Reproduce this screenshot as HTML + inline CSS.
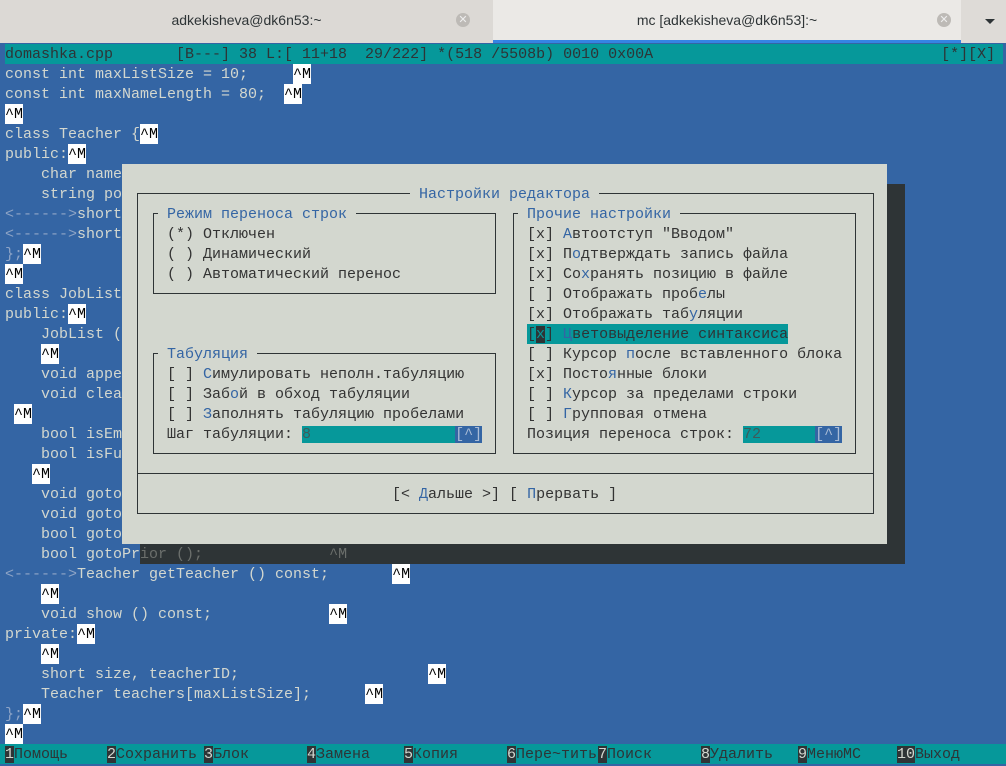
<!DOCTYPE html>
<html><head><meta charset="utf-8"><style>
*{margin:0;padding:0;box-sizing:border-box}
body{width:1006px;height:762px;overflow:hidden;background:#3465a4;position:relative;font-family:"Liberation Mono","DejaVu Sans Mono",monospace;font-size:15px}
.r{position:absolute;height:20px;line-height:22px;white-space:pre;color:#d3d7cf}
.m{background:#fff;color:#000;display:inline-block;height:20px;line-height:22px;vertical-align:top}
.d{color:#8ea4c6}
.tabs{position:absolute;left:0;top:0;width:1006px;height:43px;background:#dedbd7;font-family:"Liberation Sans",sans-serif;font-size:14px;color:#2e3436}
.tab{position:absolute;top:0;height:43px;text-align:center;line-height:40px}
.x{position:absolute;top:13px;width:14px;height:14px;border-radius:50%;background:#bdbab6;color:#eee;font-size:11px;line-height:14px;text-align:center}
.dlg{position:absolute;left:122px;top:164px;width:765px;height:380px;background:#d3d7cf}
.bx{position:absolute;border:1px solid #2e3436}
.t{color:#333}
.h{color:#3465a4}
.k{position:absolute;top:744px;height:20px;line-height:22px;white-space:pre;color:#2e3436}
.n{background:#2e3436;color:#d3d7cf}
</style></head><body>
<div class="tabs">
 <div class="tab" style="left:0;width:493px;background:#dcd9d5">adkekisheva@dk6n53:~</div>
 <div class="x" style="left:456px">✕</div>
 <div class="tab" style="left:493px;width:468px;background:#ebe9e6;border-bottom:3px solid #3584e4">mc [adkekisheva@dk6n53]:~</div>
 <div class="x" style="left:937px">✕</div>
 <div style="position:absolute;left:985px;top:19px;width:0;height:0;border-left:5px solid transparent;border-right:5px solid transparent;border-top:5px solid #2e3436"></div>
</div>
<div class="r" style="left:5px;top:44px;width:998px;background:#06989a;color:#2e3436">domashka.cpp       [B---] 38 L:[ 11+18  29/222] *(518 /5508b) 0010 0x00A                                [*][X]</div>
<div class="r" style="left:5px;top:64px">const int maxListSize = 10;     <span class="m">^M</span></div>
<div class="r" style="left:5px;top:84px">const int maxNameLength = 80;  <span class="m">^M</span></div>
<div class="r" style="left:5px;top:104px"><span class="m">^M</span></div>
<div class="r" style="left:5px;top:124px">class Teacher {<span class="m">^M</span></div>
<div class="r" style="left:5px;top:144px">public:<span class="m">^M</span></div>
<div class="r" style="left:5px;top:164px">    char name</div>
<div class="r" style="left:5px;top:184px">    string po</div>
<div class="r" style="left:5px;top:204px"><span class="d">&lt;------&gt;</span>short</div>
<div class="r" style="left:5px;top:224px"><span class="d">&lt;------&gt;</span>short</div>
<div class="r" style="left:5px;top:244px"><span class="d">};</span><span class="m">^M</span></div>
<div class="r" style="left:5px;top:264px"><span class="m">^M</span></div>
<div class="r" style="left:5px;top:284px">class JobList</div>
<div class="r" style="left:5px;top:304px">public:<span class="m">^M</span></div>
<div class="r" style="left:5px;top:324px">    JobList (</div>
<div class="r" style="left:5px;top:344px">    <span class="m">^M</span></div>
<div class="r" style="left:5px;top:364px">    void appe</div>
<div class="r" style="left:5px;top:384px">    void clea</div>
<div class="r" style="left:5px;top:404px"> <span class="m">^M</span></div>
<div class="r" style="left:5px;top:424px">    bool isEm</div>
<div class="r" style="left:5px;top:444px">    bool isFu</div>
<div class="r" style="left:5px;top:464px">   <span class="m">^M</span></div>
<div class="r" style="left:5px;top:484px">    void goto</div>
<div class="r" style="left:5px;top:504px">    void goto</div>
<div class="r" style="left:5px;top:524px">    bool goto</div>
<div style="position:absolute;left:887px;top:184px;width:18px;height:380px;background:#2e3436"></div>
<div style="position:absolute;left:140px;top:544px;width:765px;height:20px;background:#2e3436"></div>
<div class="r" style="left:5px;top:544px">    bool gotoPr<span style="color:#6b6f6c">ior ();              </span><span style="color:#6b6f6c">^M</span></div>
<div class="r" style="left:5px;top:564px"><span class="d">&lt;------&gt;</span>Teacher getTeacher () const;       <span class="m">^M</span></div>
<div class="r" style="left:5px;top:584px">    <span class="m">^M</span></div>
<div class="r" style="left:5px;top:604px">    void show () const;             <span class="m">^M</span></div>
<div class="r" style="left:5px;top:624px">private:<span class="m">^M</span></div>
<div class="r" style="left:5px;top:644px">    <span class="m">^M</span></div>
<div class="r" style="left:5px;top:664px">    short size, teacherID;                     <span class="m">^M</span></div>
<div class="r" style="left:5px;top:684px">    Teacher teachers[maxListSize];      <span class="m">^M</span></div>
<div class="r" style="left:5px;top:704px"><span class="d">};</span><span class="m">^M</span></div>
<div class="r" style="left:5px;top:724px"><span class="m">^M</span></div>

<div class="dlg"></div>
<div class="bx" style="left:137px;top:193px;width:737px;height:321px"></div>
<div class="bx" style="left:137px;top:473px;width:737px;height:0;border-width:1px 0 0 0"></div>
<div class="bx" style="left:153px;top:213px;width:343px;height:81px"></div>
<div class="bx" style="left:153px;top:353px;width:343px;height:101px"></div>
<div class="bx" style="left:513px;top:213px;width:343px;height:241px"></div>

<div class="r h" style="left:410px;top:184px;background:#d3d7cf"> Настройки редактора </div>
<div class="r h" style="left:158px;top:204px;background:#d3d7cf"> Режим переноса строк </div>
<div class="r t" style="left:167px;top:224px">(*) Отключен</div>
<div class="r t" style="left:167px;top:244px">( ) Динамический</div>
<div class="r t" style="left:167px;top:264px">( ) Автоматический перенос</div>
<div class="r h" style="left:158px;top:344px;background:#d3d7cf"> Табуляция </div>
<div class="r t" style="left:167px;top:364px">[ ] <span class="h">С</span>имулировать неполн.табуляцию</div>
<div class="r t" style="left:167px;top:384px">[ ] Заб<span class="h">о</span>й в обход табуляции</div>
<div class="r t" style="left:167px;top:404px">[ ] <span class="h">З</span>аполнять табуляцию пробелами</div>
<div class="r t" style="left:167px;top:424px">Шаг табуляции: <span style="background:#06989a;color:#3f5a5a">8                </span><span style="background:#3465a4;color:#a9bbd6">[^]</span></div>

<div class="r h" style="left:518px;top:204px;background:#d3d7cf"> Прочие настройки </div>
<div class="r t" style="left:527px;top:224px">[x] <span class="h">А</span>втоотступ "Вводом"</div>
<div class="r t" style="left:527px;top:244px">[x] П<span class="h">о</span>дтверждать запись файла</div>
<div class="r t" style="left:527px;top:264px">[x] Со<span class="h">х</span>ранять позицию в файле</div>
<div class="r t" style="left:527px;top:284px">[ ] Отображать проб<span class="h">е</span>лы</div>
<div class="r t" style="left:527px;top:304px">[x] Отображать таб<span class="h">у</span>ляции</div>
<div class="r t" style="left:527px;top:324px;background:#06989a;color:#2e3436">[<span style="background:#2e3436;color:#06989a">x</span>] <span style="color:#3465a4">Ц</span>ветовыделение синтаксиса</div>
<div class="r t" style="left:527px;top:344px">[ ] Курсор <span class="h">п</span>осле вставленного блока</div>
<div class="r t" style="left:527px;top:364px">[x] Посто<span class="h">я</span>нные блоки</div>
<div class="r t" style="left:527px;top:384px">[ ] <span class="h">К</span>урсор за пределами строки</div>
<div class="r t" style="left:527px;top:404px">[ ] <span class="h">Г</span>рупповая отмена</div>
<div class="r t" style="left:527px;top:424px">Позиция переноса строк: <span style="background:#06989a;color:#3f5a5a">72      </span><span style="background:#3465a4;color:#a9bbd6">[^]</span></div>
<div class="r t" style="left:392px;top:484px">[&lt; <span class="h">Д</span>альше &gt;] [ <span class="h">П</span>рервать ]</div>

<div style="position:absolute;left:0;top:744px;width:1006px;height:20px;background:#06989a"></div>
<div class="k" style="left:5px"><span class="n">1</span>Помощь</div>
<div class="k" style="left:107px"><span class="n">2</span>Сохранить</div>
<div class="k" style="left:204px"><span class="n">3</span>Блок</div>
<div class="k" style="left:307px"><span class="n">4</span>Замена</div>
<div class="k" style="left:404px"><span class="n">5</span>Копия</div>
<div class="k" style="left:507px"><span class="n">6</span>Пере~тить</div>
<div class="k" style="left:598px"><span class="n">7</span>Поиск</div>
<div class="k" style="left:701px"><span class="n">8</span>Удалить</div>
<div class="k" style="left:798px"><span class="n">9</span>МенюMC</div>
<div class="k" style="left:897px"><span class="n">10</span>Выход</div>
</body></html>
